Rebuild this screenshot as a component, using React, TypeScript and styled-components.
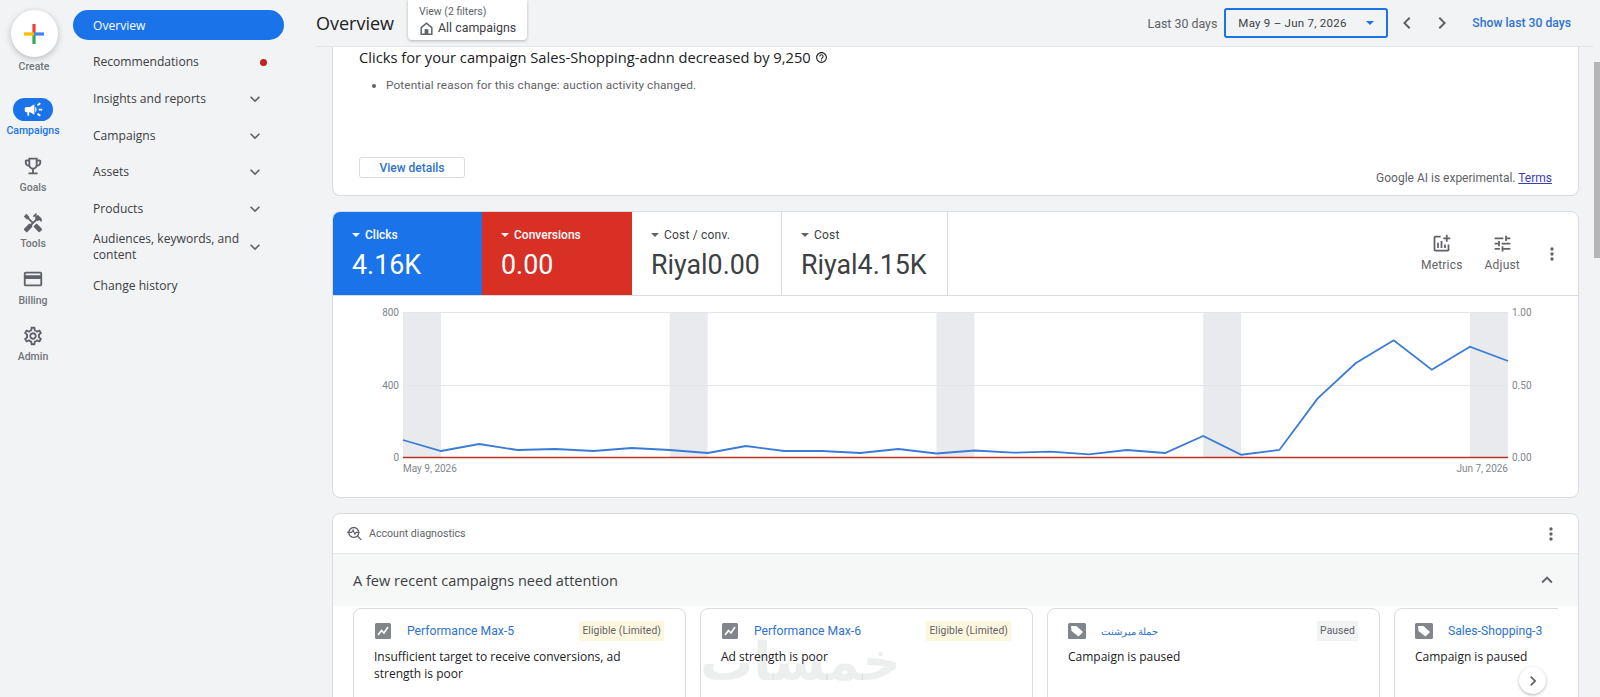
import * as React from 'react';
import styled, {createGlobalStyle} from 'styled-components';

const SANS = `'Roboto', 'Liberation Sans', sans-serif`;
const DISPLAY = `'Open Sans', 'Roboto', sans-serif`;
const BLUE = '#1a73e8';
const RED = '#d93025';
const INK = '#3c4043';
const GREY = '#5f6368';
const LINE = '#dadce0';
const LINK = '#2f72cf';

const Global = createGlobalStyle`
    html, body {
        margin: 0;
        height: 100%;
        overflow: hidden;
        background: #f1f3f4;
    }
    * {
        box-sizing: border-box;
    }
`;

const Page = styled.div`
    display: flex;
    height: 697px;
    overflow: hidden;
    background: #f1f3f4;
    font-family: ${SANS};
    color: ${INK};
`;

/* ---- icon rail ---- */

const Rail = styled.aside`
    flex: none;
    width: 66px;
    display: flex;
    flex-direction: column;
    align-items: center;
`;

const CreateBlock = styled.div`
    height: 98px;
    padding-top: 10px;
    display: flex;
    flex-direction: column;
    align-items: center;
    margin-left: 2px;
`;

const CreateButton = styled.div`
    width: 47px;
    height: 47px;
    border-radius: 50%;
    background: #fff;
    box-shadow: 0 2px 6px rgba(60, 64, 67, 0.3);
    display: flex;
    align-items: center;
    justify-content: center;
`;

const CreateLabel = styled.span`
    margin-top: 3px;
    font-size: 10.5px;
    line-height: 14px;
    font-weight: 500;
    color: #70757a;
`;

const RailItem = styled.div`
    height: 56.5px;
    display: flex;
    flex-direction: column;
    align-items: center;
    width: 100%;
`;

const RailIcon = styled.div<{$active?: boolean}>`
    width: 40px;
    height: 23px;
    border-radius: 12px;
    background: ${p => (p.$active ? BLUE : 'transparent')};
    color: ${p => (p.$active ? '#fff' : GREY)};
    display: flex;
    align-items: center;
    justify-content: center;
`;

const RailLabel = styled.span<{$active?: boolean}>`
    margin-top: 3px;
    font-size: 10.5px;
    line-height: 14px;
    font-weight: 500;
    color: ${p => (p.$active ? BLUE : '#70757a')};
`;

/* ---- section nav ---- */

const Nav = styled.nav`
    flex: none;
    width: 225px;
    padding: 7.5px 7px 0;
`;

const NavRow = styled.div<{$active?: boolean; $tall?: boolean}>`
    height: ${p => (p.$tall ? 40 : 36.67)}px;
    display: flex;
    align-items: center;
    padding: 0 20px;
    font-family: ${DISPLAY};
    font-size: 12.1px;
    line-height: 16.5px;
    font-weight: 500;
    color: ${p => (p.$active ? '#fff' : INK)};
    position: relative;
    z-index: 0;

    ${p => p.$active && `
        &::before {
            content: '';
            position: absolute;
            z-index: -1;
            left: 0;
            right: 0;
            top: 2.5px;
            height: 30px;
            border-radius: 15px;
            background: ${BLUE};
        }
    `}
`;

const NavText = styled.span`
    flex: 1;
`;

const RedDot = styled.span`
    width: 7px;
    height: 7px;
    border-radius: 50%;
    background: #c5221f;
    margin-right: -3px;
`;

const NavChevron = styled.svg`
    flex: none;
    width: 20px;
    height: 20px;
    margin-right: -1px;
    fill: ${GREY};
`;

/* ---- main column ---- */

const Main = styled.main`
    flex: 1;
    min-width: 0;
    margin-left: 24px;
    display: flex;
    flex-direction: column;
`;

const Header = styled.header`
    flex: none;
    height: 47px;
    display: flex;
    align-items: flex-start;
    border-bottom: 1px solid #e3e5e8;
    padding-right: 23px;
`;

const PageTitle = styled.h1`
    margin: 0 20px 0 1px;
    font-family: ${DISPLAY};
    font-size: 18px;
    line-height: 47px;
    font-weight: 400;
    color: #202124;
    width: 72px;
    white-space: nowrap;
`;

const ViewBox = styled.div`
    width: 119px;
    height: 40px;
    padding: 5px 10px 0 11px;
    background: #fff;
    border-radius: 0 0 4px 4px;
    box-shadow: 0 1px 3px rgba(60, 64, 67, 0.35);
`;

const ViewLabel = styled.div`
    font-size: 10.5px;
    line-height: 13px;
    color: ${GREY};
`;

const ViewValue = styled.div`
    display: flex;
    align-items: center;
    gap: 4px;
    margin-top: 2px;
    font-size: 12.4px;
    line-height: 16px;
    color: ${INK};
    white-space: nowrap;
`;

const DateTools = styled.div`
    margin-left: auto;
    height: 46px;
    display: flex;
    align-items: center;
`;

const DateHint = styled.span`
    font-size: 12.4px;
    color: ${GREY};
    margin-right: 7px;
`;

const DateSelect = styled.div`
    width: 164px;
    height: 30px;
    border: 2px solid ${BLUE};
    border-radius: 3px;
    padding: 0 12px;
    display: flex;
    align-items: center;
    justify-content: space-between;
    font-size: 11.5px;
    color: ${INK};
    letter-spacing: 0.25px;
`;

const Caret = styled.span<{$color?: string}>`
    display: inline-block;
    width: 0;
    height: 0;
    border-left: 4px solid transparent;
    border-right: 4px solid transparent;
    border-top: 4.5px solid ${p => p.$color || GREY};
`;

const Pager = styled.svg`
    width: 24px;
    height: 24px;
    fill: ${GREY};
`;

const PagerGroup = styled.div`
    display: flex;
    gap: 11px;
    margin: 0 18px 0 7px;
`;

const ShowLast = styled.a`
    font-size: 12.2px;
    font-weight: 500;
    color: ${LINK};
    white-space: nowrap;
`;

const Scroll = styled.div`
    flex: 1;
    min-height: 0;
    overflow: hidden;
    padding: 0 15px 0 17px;
    position: relative;
`;

const Card = styled.section`
    background: #fff;
    border: 1px solid ${LINE};
    border-radius: 8px;
    margin-bottom: 15px;
`;

/* ---- insight card ---- */

const InsightCard = styled(Card)`
    height: 149px;
    border-top: none;
    border-radius: 0 0 8px 8px;
    padding: 0 26px 0 26px;
    display: flex;
    flex-direction: column;
`;

const InsightTitle = styled.h2`
    margin: -1px 0 0;
    display: flex;
    align-items: center;
    gap: 4px;
    font-family: ${DISPLAY};
    font-size: 14.7px;
    line-height: 22px;
    font-weight: 400;
    color: #202124;
`;

const InsightList = styled.ul`
    margin: 8px 0 0;
    padding: 0 0 0 27px;
    font-size: 11.8px;
    line-height: 18px;
    color: ${GREY};
    letter-spacing: 0.12px;
`;

const InsightFooter = styled.div`
    margin-top: auto;
    margin-bottom: 17px;
    display: flex;
    align-items: flex-end;
    justify-content: space-between;
`;

const GhostButton = styled.button`
    width: 106px;
    height: 21px;
    padding: 0;
    background: #fff;
    border: 1px solid ${LINE};
    border-radius: 3px;
    color: ${LINK};
    font-family: ${SANS};
    font-size: 12px;
    font-weight: 500;
`;

const AiNote = styled.span`
    font-size: 12px;
    line-height: 14px;
    margin-bottom: -7px;
    color: ${GREY};
`;

const Terms = styled.a`
    color: #3c3cb8;
    text-decoration: underline;
`;

/* ---- performance card ---- */

const MetricsBar = styled.div`
    display: flex;
    height: 84px;
    border-bottom: 1px solid ${LINE};
`;

const Metric = styled.div<{$bg?: string; $width: number}>`
    flex: none;
    width: ${p => p.$width}px;
    padding: 15px 0 0 19px;
    background: ${p => p.$bg || '#fff'};
    color: ${p => (p.$bg ? '#fff' : INK)};
    border-right: ${p => (p.$bg ? 'none' : `1px solid ${LINE}`)};
    &:first-child {
        border-top-left-radius: 7px;
    }
`;

const MetricLabel = styled.div<{$strong?: boolean}>`
    display: flex;
    align-items: center;
    gap: 5px;
    font-size: 12px;
    line-height: 16px;
    font-weight: ${p => (p.$strong ? 500 : 400)};
    letter-spacing: ${p => (p.$strong ? 0 : 0.2)}px;
`;

const MetricValue = styled.div`
    margin-top: 5px;
    font-size: 26.8px;
    line-height: 34px;
`;

const MetricTools = styled.div`
    margin-left: auto;
    padding-right: 16px;
    display: flex;
    align-items: center;
    gap: 22px;
`;

const ToolButton = styled.div`
    display: flex;
    flex-direction: column;
    align-items: center;
    font-size: 12px;
    line-height: 16px;
    letter-spacing: 0.2px;
    color: ${GREY};
    padding-bottom: 1px;
`;

const ToolIcon = styled.svg`
    width: 21px;
    height: 21px;
    margin-bottom: 3px;
    fill: ${GREY};
`;

const Dots = styled.svg`
    width: 20px;
    height: 20px;
    fill: ${GREY};
`;

const ChartSvg = styled.svg`
    display: block;
    width: 1245px;
    height: 201px;
    text {
        font-family: ${SANS};
        font-size: 10px;
        fill: #80868b;
    }
`;

/* ---- diagnostics card ---- */

const DiagHead = styled.div`
    height: 40px;
    padding: 0 17px 0 13px;
    display: flex;
    align-items: center;
    gap: 6px;
    border-bottom: 1px solid #e3e5e8;
    font-size: 10.6px;
    color: ${GREY};
`;

const DiagTitle = styled.span`
    flex: 1;
`;

const AttentionBar = styled.div`
    height: 52px;
    padding: 0 20px;
    display: flex;
    align-items: center;
    justify-content: space-between;
    background: #f6f8f8;
    font-family: ${DISPLAY};
    font-size: 14.55px;
    color: ${INK};
`;

const CardViewport = styled.div`
    margin: 2px 20px 0;
    overflow: hidden;
`;

const CardTrack = styled.div`
    display: flex;
    gap: 14px;
`;

const CampaignCard = styled.article`
    flex: none;
    width: 333px;
    height: 140px;
    padding: 12px 21px 0 20px;
    border: 1px solid ${LINE};
    border-radius: 8px;
`;

const CampaignTop = styled.div`
    display: flex;
    align-items: center;
    height: 20px;
    margin-bottom: 7px;
`;

const TypeIcon = styled.svg`
    flex: none;
    width: 18px;
    height: 16px;
    margin-right: 15px;
`;

const CampaignLink = styled.a<{$small?: boolean}>`
    flex: 1;
    font-size: ${p => (p.$small ? 9.5 : 12.2)}px;
    color: ${LINK};
    white-space: nowrap;
`;

const Badge = styled.span<{$bg: string}>`
    flex: none;
    height: 20px;
    padding: 0 3px;
    background: ${p => p.$bg};
    font-size: 10.3px;
    line-height: 20px;
    color: ${GREY};
    letter-spacing: 0.1px;
`;

const CampaignText = styled.p`
    margin: 0;
    font-family: ${DISPLAY};
    font-size: 12px;
    line-height: 17px;
    color: #202124;
`;

const NextButton = styled.div`
    position: absolute;
    right: 48px;
    top: 620px;
    width: 27px;
    height: 27px;
    border-radius: 50%;
    background: #fff;
    box-shadow: 0 1px 3px rgba(60, 64, 67, 0.4);
    display: flex;
    align-items: center;
    justify-content: center;
`;

const Watermark = styled.div`
    position: absolute;
    left: 385px;
    top: 580px;
    font-family: 'DejaVu Sans', sans-serif;
    font-size: 53px;
    line-height: 70px;
    font-weight: 700;
    color: rgba(60, 64, 67, 0.09);
    pointer-events: none;
`;

const Scrollbar = styled.div`
    flex: none;
    width: 6px;
    padding-top: 62px;
`;

const Thumb = styled.div`
    height: 196px;
    background: #b4b6b8;
`;

/* ---- drawings ---- */

const Icon = ({d, size = 20}: {d: string; size?: number}) => (
    <svg width={size} height={size} viewBox="0 0 24 24" fill="currentColor"><path d={d} /></svg>
);

const CHEVRON_DOWN = 'M7.41 8.59 12 13.17l4.59-4.58L18 10l-6 6-6-6z';
const CHEVRON_LEFT = 'M15.41 7.41 14 6l-6 6 6 6 1.41-1.41L10.83 12z';
const CHEVRON_RIGHT = 'M10 6 8.59 7.41 13.17 12l-4.58 4.59L10 18l6-6z';
const MORE = 'M12 8a2 2 0 1 0 0-4 2 2 0 0 0 0 4zm0 2a2 2 0 1 0 0 4 2 2 0 0 0 0-4zm0 6a2 2 0 1 0 0 4 2 2 0 0 0 0-4z';
const CAMPAIGN = 'M18 11v2h4v-2h-4zm-2 6.61c.96.71 2.21 1.65 3.2 2.39.4-.53.8-1.07 1.2-1.6-.99-.74-2.24-1.68-3.2-2.4-.4.54-.8 1.08-1.2 1.61zM20.4 5.6c-.4-.53-.8-1.07-1.2-1.6-.99.74-2.24 1.68-3.2 2.4.4.53.8 1.07 1.2 1.6.96-.72 2.21-1.65 3.2-2.4zM4 9c-1.1 0-2 .9-2 2v2c0 1.1.9 2 2 2h1v4h2v-4h1l5 3V6L8 9H4zm11.5 3c0-1.33-.58-2.53-1.5-3.35v6.69c.92-.81 1.5-2.01 1.5-3.34z';
const TROPHY = 'M19 5h-2V3H7v2H5c-1.1 0-2 .9-2 2v1c0 2.55 1.92 4.63 4.39 4.94.63 1.5 1.98 2.63 3.61 2.96V19H7v2h10v-2h-4v-3.1c1.63-.33 2.98-1.46 3.61-2.96C19.08 12.63 21 10.55 21 8V7c0-1.1-.9-2-2-2zM5 8V7h2v3.82C5.84 10.4 5 9.3 5 8zm7 6c-1.65 0-3-1.35-3-3V5h6v6c0 1.65-1.35 3-3 3zm7-6c0 1.3-.84 2.4-2 2.82V7h2v1z';
const TOOLS = 'M21.67 18.17l-5.3-5.3h-.99l-2.54 2.54v.99l5.3 5.3c.39.39 1.02.39 1.41 0l2.12-2.12c.39-.38.39-1.02 0-1.41z M17.34 10.19l1.41-1.41 2.12 2.12c1.17-1.17 1.17-3.07 0-4.24l-3.54-3.54-1.41 1.41V1.71l-.7-.71-3.54 3.54.71.71h2.83l-1.41 1.41 1.06 1.06-2.89 2.89-4.13-4.13V5.06L4.83 2.04 2 4.87 5.03 7.9h1.41l4.13 4.13-.85.85H7.6l-5.3 5.3c-.39.39-.39 1.02 0 1.41l2.12 2.12c.39.39 1.02.39 1.41 0l5.3-5.3v-2.12l5.15-5.15 1.06 1.05z';
const CARD = 'M20 4H4c-1.11 0-1.99.89-1.99 2L2 18c0 1.11.89 2 2 2h16c1.11 0 2-.89 2-2V6c0-1.11-.89-2-2-2zm0 14H4v-6h16v6zm0-10H4V6h16v2z';
const GEAR = 'M19.43 12.98c.04-.32.07-.64.07-.98 0-.34-.03-.66-.07-.98l2.11-1.65c.19-.15.24-.42.12-.64l-2-3.46c-.09-.16-.26-.25-.44-.25-.06 0-.12.01-.17.03l-2.49 1c-.52-.4-1.08-.73-1.69-.98l-.38-2.65C14.46 2.18 14.25 2 14 2h-4c-.25 0-.46.18-.49.42l-.38 2.65c-.61.25-1.17.59-1.69.98l-2.49-1c-.06-.02-.12-.03-.18-.03-.17 0-.34.09-.43.25l-2 3.46c-.13.22-.07.49.12.64l2.11 1.65c-.04.32-.07.65-.07.98 0 .33.03.66.07.98l-2.11 1.65c-.19.15-.24.42-.12.64l2 3.46c.09.16.26.25.44.25.06 0 .12-.01.17-.03l2.49-1c.52.4 1.08.73 1.69.98l.38 2.65c.03.24.24.42.49.42h4c.25 0 .46-.18.49-.42l.38-2.65c.61-.25 1.17-.59 1.69-.98l2.49 1c.06.02.12.03.18.03.17 0 .34-.09.43-.25l2-3.46c.12-.22.07-.49-.12-.64l-2.11-1.65zm-1.98-1.71c.04.31.05.52.05.73 0 .21-.02.43-.05.73l-.14 1.13.89.7 1.08.84-.7 1.21-1.27-.51-1.04-.42-.9.68c-.43.32-.84.56-1.25.73l-1.06.43-.16 1.13-.2 1.35h-1.4l-.19-1.35-.16-1.13-1.06-.43c-.43-.18-.83-.41-1.23-.71l-.91-.7-1.06.43-1.27.51-.7-1.21 1.08-.84.89-.7-.14-1.13c-.03-.31-.05-.54-.05-.74s.02-.43.05-.73l.14-1.13-.89-.7-1.08-.84.7-1.21 1.27.51 1.04.42.9-.68c.43-.32.84-.56 1.25-.73l1.06-.43.16-1.13.2-1.35h1.39l.19 1.35.16 1.13 1.06.43c.43.18.83.41 1.23.71l.91.7 1.06-.43 1.27-.51.7 1.21-1.07.85-.89.7.14 1.13zM12 8c-2.21 0-4 1.79-4 4s1.79 4 4 4 4-1.79 4-4-1.79-4-4-4zm0 6c-1.1 0-2-.9-2-2s.9-2 2-2 2 .9 2 2-.9 2-2 2z';
const ADD_CHART = 'M22 5v2h-3v3h-2V7h-3V5h3V2h2v3h3zm-3 14H5V5h6V3H5c-1.1 0-2 .9-2 2v14c0 1.1.9 2 2 2h14c1.1 0 2-.9 2-2v-6h-2v6zm-4-6v4h2v-4h-2zm-4 4h2V9h-2v8zm-2 0v-6H7v6h2z';
const TUNE = 'M3 17v2h6v-2H3zM3 5v2h10V5H3zm10 16v-2h8v-2h-8v-2h-2v6h2zM7 9v2H3v2h4v2h2V9H7zm14 4v-2H11v2h10zm-6-4h2V7h4V5h-4V3h-2v6z';
const HELP = 'M11 18h2v-2h-2v2zm1-16C6.48 2 2 6.48 2 12s4.48 10 10 10 10-4.48 10-10S17.52 2 12 2zm0 18c-4.41 0-8-3.59-8-8s3.59-8 8-8 8 3.59 8 8-3.59 8-8 8zm0-14c-2.21 0-4 1.79-4 4h2c0-1.1.9-2 2-2s2 .9 2 2c0 2-3 1.75-3 5h2c0-2.25 3-2.5 3-5 0-2.21-1.79-4-4-4z';

const GooglePlus = () => (
    <svg width="22" height="22" viewBox="0 0 22 22">
        <rect x="9.4" y="1" width="3.2" height="10" fill="#ea4335" />
        <rect x="9.4" y="11" width="3.2" height="10" fill="#34a853" />
        <rect x="1" y="9.4" width="10" height="3.2" fill="#fbbc04" />
        <rect x="11" y="9.4" width="10" height="3.2" fill="#4285f4" />
    </svg>
);

const HomeGlyph = () => (
    <svg width="15" height="15" viewBox="0 0 24 24" fill="none" stroke={GREY} strokeWidth="2.4">
        <path d="M3.5 10.5 12 3.5l8.5 7V21h-17z" />
        <rect x="9" y="13" width="6" height="8" fill={GREY} stroke="none" />
    </svg>
);

const DiagGlyph = () => (
    <svg width="17" height="17" viewBox="0 0 24 24" fill="none" stroke={GREY} strokeWidth="1.9">
        <circle cx="11" cy="10.5" r="7" />
        <path d="M16 15.5 21.5 21" />
        <path d="M1.5 10.5H8l2-3.5 2.5 6 1.5-2.5h5" strokeWidth="1.6" />
    </svg>
);

const PmaxGlyph = () => (
    <TypeIcon viewBox="0 0 18 16">
        <rect x="1" width="16" height="16" rx="1.5" fill="#80868b" />
        <path d="M4 12 7.5 7.5 10 10l4-6" fill="none" stroke="#fff" strokeWidth="1.6" />
    </TypeIcon>
);

const ShopGlyph = () => (
    <TypeIcon viewBox="0 0 18 16">
        <rect width="18" height="16" rx="1.5" fill="#80868b" />
        <path d="M3 3h5.5l6.5 6-4.5 4.5L3.5 8z" fill="#fff" />
    </TypeIcon>
);

/* ---- data ---- */

const X0 = 403;
const X1 = 1508;
const STEP = (X1 - X0) / 29;
const Y_OFFSET = 296;
const X_OFFSET = 333;

const CLICK_Y = [
    440, 451, 444, 450, 449, 451, 448, 450, 453, 446,
    451, 451, 453, 449, 453.5, 450.5, 452.7, 451.7, 454.3, 450,
    453, 436, 454.7, 450, 398.7, 363.3, 340.3, 369.7, 346.7, 361,
];

const WEEKEND_STARTS = [0, 7, 14, 21, 28];

const metrics = [
    {label: 'Clicks', value: '4.16K', bg: BLUE, width: 149},
    {label: 'Conversions', value: '0.00', bg: RED, width: 150},
    {label: 'Cost / conv.', value: 'Riyal0.00', width: 150},
    {label: 'Cost', value: 'Riyal4.15K', width: 166},
];

const navItems = [
    {label: 'Insights and reports'},
    {label: 'Campaigns'},
    {label: 'Assets'},
    {label: 'Products'},
    {label: 'Audiences, keywords, and content', tall: true},
];

const railItems = [
    {label: 'Goals', icon: TROPHY},
    {label: 'Tools', icon: TOOLS},
    {label: 'Billing', icon: CARD},
    {label: 'Admin', icon: GEAR},
];

const LIMITED = {text: 'Eligible (Limited)', bg: '#fef7e0'};
const PAUSED = {text: 'Paused', bg: '#f1f3f4'};

const campaigns = [
    {name: 'Performance Max-5', kind: 'pmax', badge: LIMITED, text: 'Insufficient target to receive conversions, ad strength is poor'},
    {name: 'Performance Max-6', kind: 'pmax', badge: LIMITED, text: 'Ad strength is poor'},
    {name: 'حملة ميرشنت', kind: 'shop', small: true, badge: PAUSED, text: 'Campaign is paused'},
    {name: 'Sales-Shopping-3', kind: 'shop', badge: PAUSED, text: 'Campaign is paused'},
];

const Chart = () => {
    const sx = (x: number) => x - X_OFFSET;
    const sy = (y: number) => y - Y_OFFSET;
    const points = CLICK_Y.map((y, i) => `${sx(X0 + i * STEP)},${sy(y)}`).join(' ');
    return (
        <ChartSvg viewBox="0 0 1245 201">
            {WEEKEND_STARTS.map(day => (
                <rect key={day} x={sx(X0 + day * STEP)} y={sy(312)} width={38} height={145} fill="#e8eaed" />
            ))}
            {[312, 385].map(y => (
                <line key={y} x1={sx(X0)} x2={sx(X1)} y1={sy(y) + 0.5} y2={sy(y) + 0.5} stroke="#e3e5e8" />
            ))}
            <polyline points={points} fill="none" stroke="#3a7bd5" strokeWidth="1.8" />
            <line x1={sx(X0)} x2={sx(X1)} y1={sy(457.5)} y2={sy(457.5)} stroke="#b8332b" strokeWidth="1.6" />
            {[['800', 312], ['400', 385], ['0', 457]].map(([t, y]) => (
                <text key={t} x={sx(399)} y={sy(Number(y)) + 3.5} textAnchor="end">{t}</text>
            ))}
            {[['1.00', 312], ['0.50', 385], ['0.00', 457]].map(([t, y]) => (
                <text key={t} x={sx(1512)} y={sy(Number(y)) + 3.5}>{t}</text>
            ))}
            <text x={sx(403)} y={sy(472)}>May 9, 2026</text>
            <text x={sx(1508)} y={sy(472)} textAnchor="end">Jun 7, 2026</text>
        </ChartSvg>
    );
};

export default function App() {
    return (
        <Page>
            <Global />
            <Rail>
                <CreateBlock>
                    <CreateButton><GooglePlus /></CreateButton>
                    <CreateLabel>Create</CreateLabel>
                </CreateBlock>
                <RailItem>
                    <RailIcon $active><Icon d={CAMPAIGN} size={21} /></RailIcon>
                    <RailLabel $active>Campaigns</RailLabel>
                </RailItem>
                {railItems.map(item => (
                    <RailItem key={item.label}>
                        <RailIcon><Icon d={item.icon} size={22} /></RailIcon>
                        <RailLabel>{item.label}</RailLabel>
                    </RailItem>
                ))}
            </Rail>
            <Nav>
                <NavRow $active><NavText>Overview</NavText></NavRow>
                <NavRow><NavText>Recommendations</NavText><RedDot /></NavRow>
                {navItems.map(item => (
                    <NavRow key={item.label} $tall={item.tall}>
                        <NavText>{item.label}</NavText>
                        <NavChevron viewBox="0 0 24 24"><path d={CHEVRON_DOWN} /></NavChevron>
                    </NavRow>
                ))}
                <NavRow><NavText>Change history</NavText></NavRow>
            </Nav>
            <Main>
                <Header>
                    <PageTitle>Overview</PageTitle>
                    <ViewBox>
                        <ViewLabel>View (2 filters)</ViewLabel>
                        <ViewValue><HomeGlyph />All campaigns</ViewValue>
                    </ViewBox>
                    <DateTools>
                        <DateHint>Last 30 days</DateHint>
                        <DateSelect>May 9 – Jun 7, 2026<Caret $color={BLUE} /></DateSelect>
                        <PagerGroup>
                            <Pager viewBox="0 0 24 24"><path d={CHEVRON_LEFT} /></Pager>
                            <Pager viewBox="0 0 24 24"><path d={CHEVRON_RIGHT} /></Pager>
                        </PagerGroup>
                        <ShowLast>Show last 30 days</ShowLast>
                    </DateTools>
                </Header>
                <Scroll>
                    <InsightCard>
                        <InsightTitle>
                            Clicks for your campaign Sales-Shopping-adnn decreased by 9,250
                            <Icon d={HELP} size={13} />
                        </InsightTitle>
                        <InsightList>
                            <li>Potential reason for this change: auction activity changed.</li>
                        </InsightList>
                        <InsightFooter>
                            <GhostButton>View details</GhostButton>
                            <AiNote>Google AI is experimental. <Terms>Terms</Terms></AiNote>
                        </InsightFooter>
                    </InsightCard>
                    <Card>
                        <MetricsBar>
                            {metrics.map(m => (
                                <Metric key={m.label} $bg={m.bg} $width={m.width}>
                                    <MetricLabel $strong={!!m.bg}><Caret $color={m.bg ? '#fff' : GREY} />{m.label}</MetricLabel>
                                    <MetricValue>{m.value}</MetricValue>
                                </Metric>
                            ))}
                            <MetricTools>
                                <ToolButton>
                                    <ToolIcon viewBox="0 0 24 24"><path d={ADD_CHART} /></ToolIcon>Metrics
                                </ToolButton>
                                <ToolButton>
                                    <ToolIcon viewBox="0 0 24 24"><path d={TUNE} /></ToolIcon>Adjust
                                </ToolButton>
                                <Dots viewBox="0 0 24 24"><path d={MORE} /></Dots>
                            </MetricTools>
                        </MetricsBar>
                        <Chart />
                    </Card>
                    <Card>
                        <DiagHead>
                            <DiagGlyph />
                            <DiagTitle>Account diagnostics</DiagTitle>
                            <Dots viewBox="0 0 24 24"><path d={MORE} /></Dots>
                        </DiagHead>
                        <AttentionBar>
                            A few recent campaigns need attention
                            <svg width="22" height="22" viewBox="0 0 24 24" fill={GREY}><path d="M12 8l-6 6 1.41 1.41L12 10.83l4.59 4.58L18 14z" /></svg>
                        </AttentionBar>
                        <CardViewport>
                            <CardTrack>
                                {campaigns.map(c => (
                                    <CampaignCard key={c.name}>
                                        <CampaignTop>
                                            {c.kind === 'pmax' ? <PmaxGlyph /> : <ShopGlyph />}
                                            <CampaignLink $small={c.small}>{c.name}</CampaignLink>
                                            <Badge $bg={c.badge.bg}>{c.badge.text}</Badge>
                                        </CampaignTop>
                                        <CampaignText>{c.text}</CampaignText>
                                    </CampaignCard>
                                ))}
                            </CardTrack>
                        </CardViewport>
                    </Card>
                    <Watermark>خمسات</Watermark>
                    <NextButton>
                        <svg width="20" height="20" viewBox="0 0 24 24" fill={GREY}><path d={CHEVRON_RIGHT} /></svg>
                    </NextButton>
                </Scroll>
            </Main>
            <Scrollbar><Thumb /></Scrollbar>
        </Page>
    );
}
